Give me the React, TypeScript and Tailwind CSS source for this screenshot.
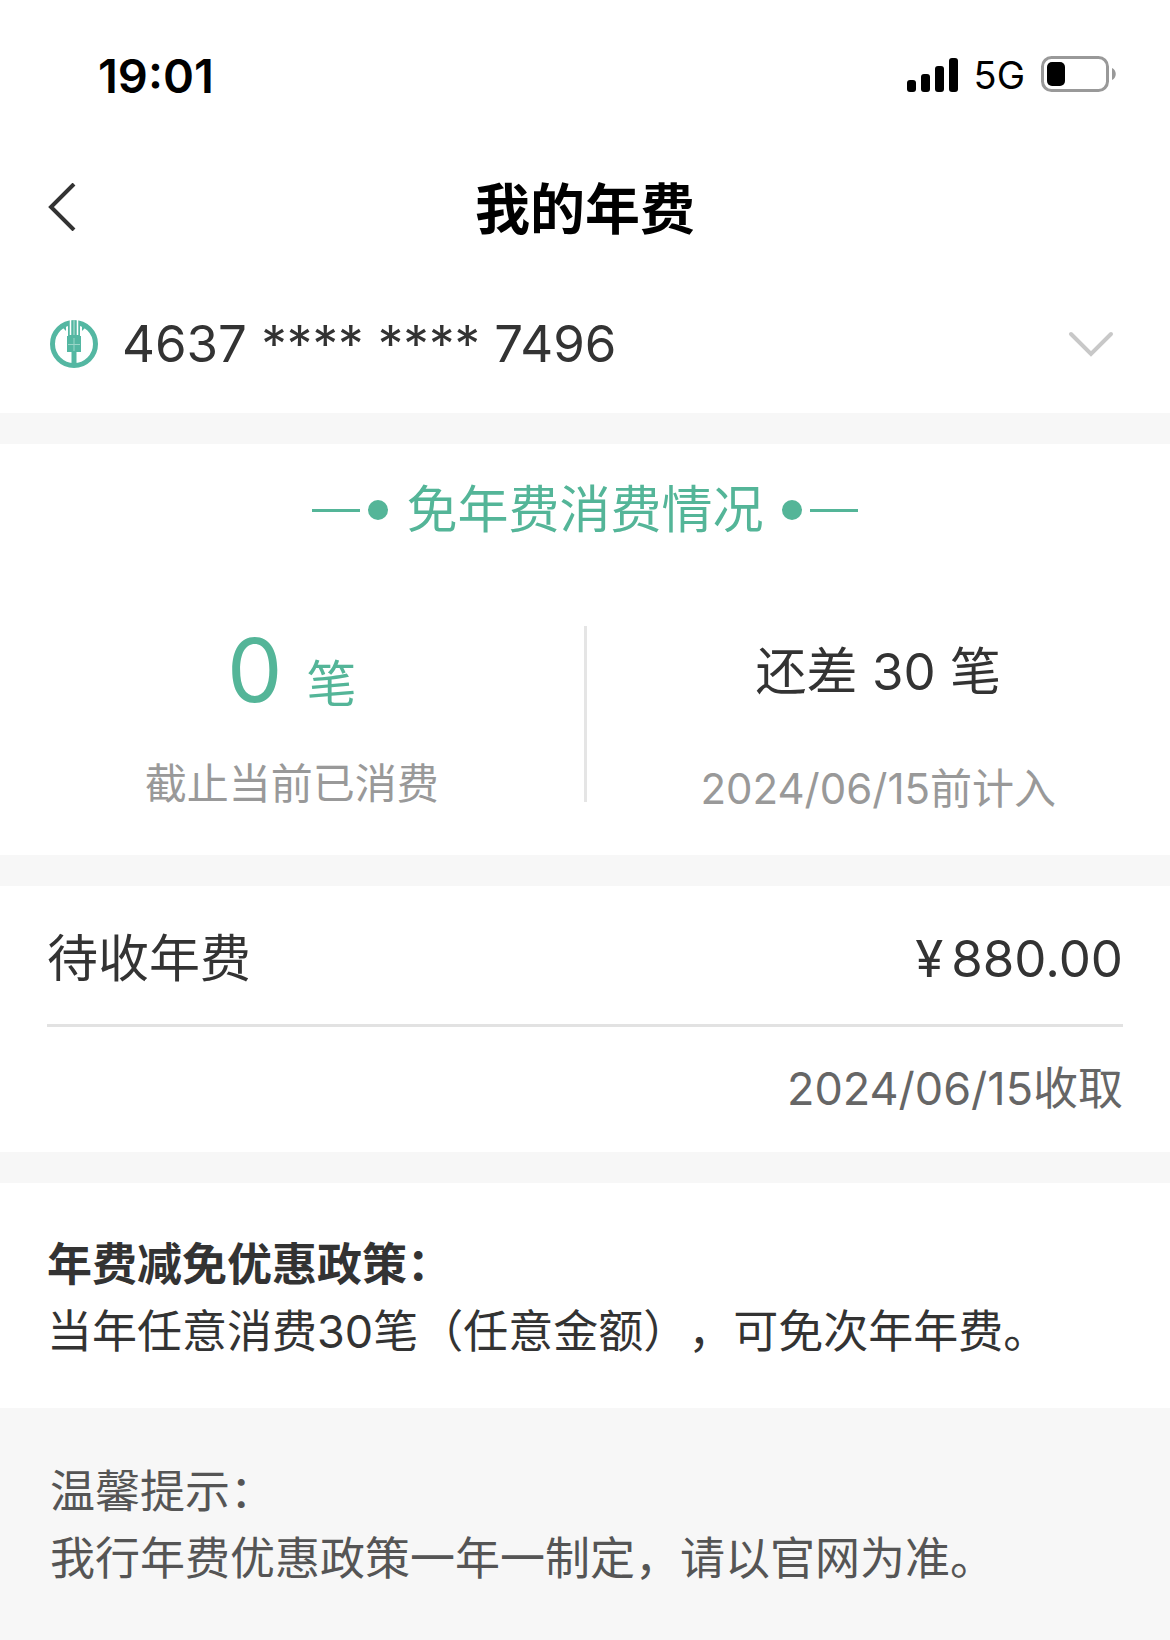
import React, { useState } from 'react';

interface IStat {
  caption: string;
  children: React.ReactNode;
}

const cards = ['4637 **** **** 7496'];

const policy = {
  title: '年费减免优惠政策：',
  content: '当年任意消费30笔（任意金额），可免次年年费。',
};

const tips = {
  title: '温馨提示：',
  content: '我行年费优惠政策一年一制定，请以官网为准。',
};

const StatusBar: React.FC = () => (
  <div className="flex h-[150px] items-center justify-between pl-[98px] pr-[53px] text-black">
    <span className="text-[47px] font-semibold leading-none">19:01</span>
    <div className="flex items-center gap-4">
      <svg width="51" height="36" viewBox="0 0 51 36" aria-hidden="true">
        <rect x="0" y="23" width="9" height="12" rx="3" />
        <rect x="14" y="17" width="9" height="18" rx="3" />
        <rect x="28" y="9" width="9" height="26" rx="3" />
        <rect x="42" y="1" width="9" height="34" rx="3" />
      </svg>
      <span className="text-[38px] leading-none">5G</span>
      <svg width="76" height="38" viewBox="0 0 76 38" aria-hidden="true">
        <rect x="1.5" y="1.5" width="65" height="33" rx="9" fill="none" stroke="#999" strokeWidth="3" />
        <rect x="6" y="6" width="18" height="24" rx="5" />
        <path d="M71 12c5 2 5 10 0 12z" fill="#999" />
      </svg>
    </div>
  </div>
);

const BankLogo: React.FC = () => (
  <svg width="48" height="48" viewBox="0 0 48 48" aria-hidden="true" className="shrink-0">
    <circle cx="24" cy="24" r="21.500" fill="none" stroke="#54b7a2" strokeWidth="5" />
    <path d="M18 2h12v14h1v16h-4.500v15h-5V32H17V16h1z" fill="#54b7a2" />
    <path d="M16 4v7l-4-4zM32 4v7l4-4z" fill="#54b7a2" />
    <path d="M20.500 0v15M27.500 0v15" stroke="#fff" strokeWidth="1.500" />
    <path d="M24 0v15" stroke="#fff" strokeWidth=".6" />
    <path d="M18 24.500h12M24 18v13" stroke="#9ad6c8" strokeWidth="1" />
  </svg>
);

const Divider: React.FC = () => <div className="h-[31px] bg-[#f7f7f7]" />;

const Stat: React.FC<IStat> = ({ caption, children }) => (
  <div className="flex flex-1 flex-col items-center">
    {children}
    <p className="text-[42px] leading-[60px] text-[#999]">{caption}</p>
  </div>
);

const App: React.FC = () => {
  const [card, setCard] = useState(cards[0]);

  return (
    <div className="flex min-h-screen flex-col bg-white font-['Inter','Noto_Sans_CJK_SC',sans-serif] text-[#333] [text-spacing-trim:space-all]">
      <StatusBar />

      <header className="grid h-[114px] grid-cols-[1fr_auto_1fr] items-center px-12">
        <button type="button" aria-label="返回" className="justify-self-start">
          <svg width="28" height="48" viewBox="0 0 28 48" fill="none" stroke="#333" strokeWidth="4">
            <path d="M26 1 3 24l23 23" />
          </svg>
        </button>
        <h1 className="pt-1 text-[55px] font-bold leading-none text-black">我的年费</h1>
      </header>

      <div className="flex items-center gap-6 pb-[29px] pl-[50px] pr-14 pt-10">
        <BankLogo />
        <select
          aria-label="选择卡片"
          value={card}
          onChange={(e) => setCard(e.target.value)}
          className="h-20 min-w-0 flex-1 appearance-none bg-transparent text-[51px]"
        >
          {cards.map((item) => (
            <option key={item} value={item}>{item}</option>
          ))}
        </select>
        <svg width="46" height="26" viewBox="0 0 46 26" fill="none" stroke="#c8c8c8" strokeWidth="4" strokeLinecap="round" aria-hidden="true">
          <path d="m3 3 20 20L43 3" />
        </svg>
      </div>

      <Divider />

      <section className="pb-9 pt-[30px]">
        <h2 className="flex items-center justify-center text-[51px] leading-[72px] text-[#54b598]">
          <span className="h-[3px] w-12 bg-[#54b598]" />
          <span className="ml-2 mr-[18px] size-5 rounded-full bg-[#54b598]" />
          免年费消费情况
          <span className="ml-[18px] mr-2 size-5 rounded-full bg-[#54b598]" />
          <span className="h-[3px] w-12 bg-[#54b598]" />
        </h2>

        <div className="mt-20 flex items-start">
          <Stat caption="截止当前已消费">
            <p className="flex h-32 items-baseline gap-6 text-[50px] leading-[88px] text-[#54b598]">
              <span className="text-[88px]">0</span>
              笔
            </p>
          </Stat>
          <div className="h-44 w-[3px] bg-[#e5e5e5]" />
          <Stat caption="2024/06/15前计入">
            <p className="h-[133px] text-[51px] leading-[92px]">还差 30 笔</p>
          </Stat>
        </div>
      </section>

      <Divider />

      <section className="px-[47px]">
        <div className="flex h-[141px] items-center justify-between border-b-3 border-[#e2e2e2] pt-2 text-[51px]">
          <span>待收年费</span>
          <span className="flex gap-2">
            <span>¥</span>
            <span>880.00</span>
          </span>
        </div>
        <p className="pb-[29px] pt-7 text-right text-[45px] leading-[68px] text-[#666]">2024/06/15收取</p>
      </section>

      <Divider />

      <section className="px-[47px] pb-[43px] pt-12 text-[45px] leading-[67px]">
        <h3 className="font-bold">{policy.title}</h3>
        <p>{policy.content}</p>
      </section>

      <footer className="flex-1 bg-[#f7f7f7] px-[50px] pb-12 pt-[50px] text-[45px] leading-[67px] text-[#555]">
        <p>{tips.title}</p>
        <p>{tips.content}</p>
      </footer>
    </div>
  );
};

export default App;
